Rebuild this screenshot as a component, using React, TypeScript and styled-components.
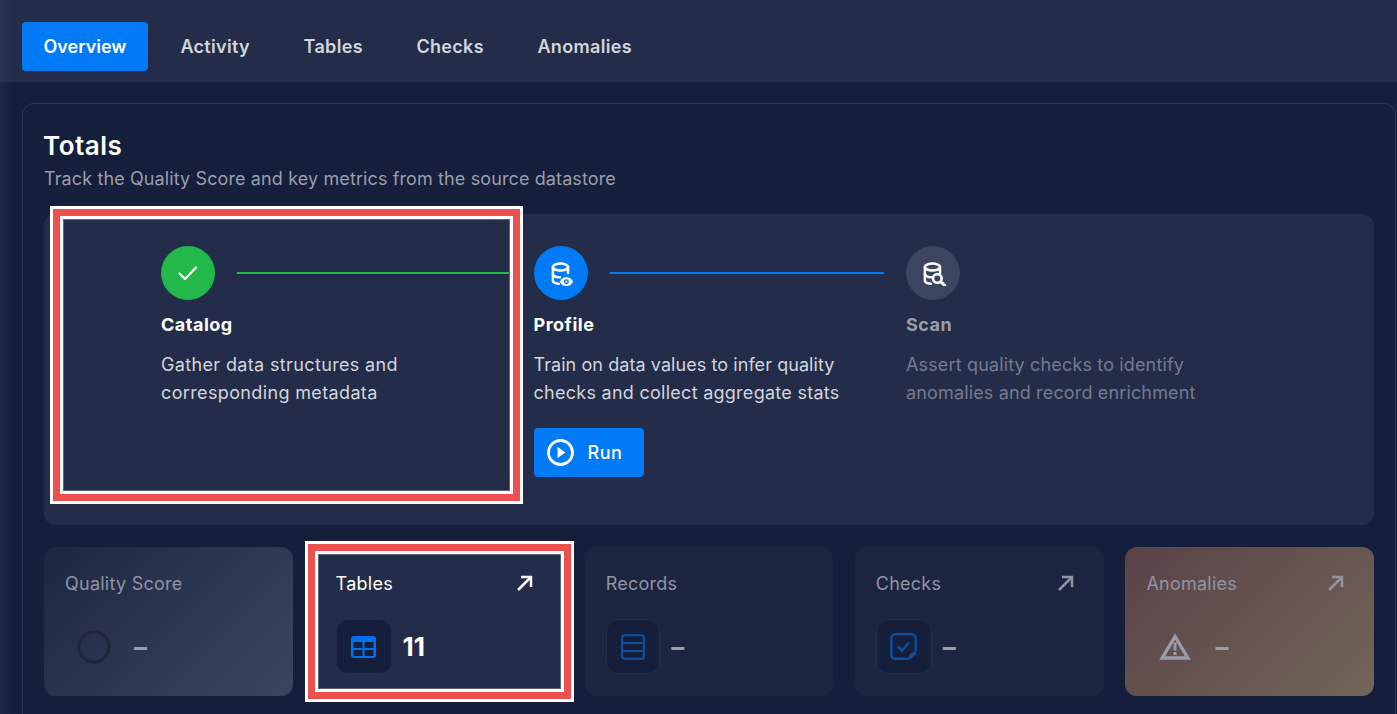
import React from "react";
import styled, { createGlobalStyle } from "styled-components";

const Global = createGlobalStyle`
  html, body { margin: 0; padding: 0; height: 714px; overflow: hidden; background: #151f3b; }
  * { box-sizing: border-box; }
  body { font-family: Inter, "Noto Sans", sans-serif; }
`;

const Page = styled.div`
  width: 1397px;
  height: 714px;
  overflow: hidden;
  display: flex;
  flex-direction: column;
  background: #151f3b;
`;
const TopBar = styled.nav`
  height: 82px;
  flex: none;
  background: linear-gradient(90deg, #2a3551 0, #232c48 12px);
  padding: 22px;
  display: flex;
  gap: 10.5px;
  align-items: flex-start;
`;
const Tab = styled.div<{ $active?: boolean }>`
  height: 49px;
  padding: 0 21.5px;
  border-radius: 4px;
  display: flex;
  align-items: center;
  font-size: 18px;
  font-weight: 600;
  letter-spacing: ${(p) => (p.$active ? "0" : "0.33px")};
  color: ${(p) => (p.$active ? "#ffffff" : "#d3d5db")};
  background: ${(p) => (p.$active ? "#007bf5" : "transparent")};
  &:nth-child(2) {
    margin-left: 0.5px;
  }
`;
const Main = styled.main`
  flex: 1;
  padding: 21px 0 0 22px;
  background: linear-gradient(90deg, #1b2845 0, #151f3b 12px);
`;
const Card = styled.section`
  width: 1374px;
  height: 700px;
  border: 1px solid #2d3753;
  border-radius: 12px;
  padding: 21px;
`;
const Title = styled.h1`
  margin: 5px 0 0 -1px;
  font-size: 26px;
  line-height: 32px;
  font-weight: 600;
  letter-spacing: 0.5px;
  color: #fff;
`;
const Subtitle = styled.p`
  margin: 4px 0 0;
  font-size: 18px;
  line-height: 26px;
  color: #9a9eab;
  letter-spacing: 0.115px;
`;
const Panel = styled.div`
  position: relative;
  margin-top: 22px;
  width: 1330px;
  height: 311px;
  border-radius: 12px;
  background: #232c48;
  padding: 32px 96px 0 117px;
  display: grid;
  grid-template-columns: repeat(3, 372.5px);
`;
const Step = styled.div``;
const StepHead = styled.div`
  display: flex;
  align-items: center;
  gap: 22px;
`;
const Circle = styled.div<{ $bg: string }>`
  width: 54px;
  height: 54px;
  flex: none;
  border-radius: 50%;
  background: ${(p) => p.$bg};
  display: flex;
  align-items: center;
  justify-content: center;
`;
const Connector = styled.div<{ $color: string }>`
  flex: 1;
  height: 2px;
  margin-right: 22px;
  background: ${(p) => p.$color};
`;
const StepTitle = styled.div<{ $muted?: boolean }>`
  margin-top: 13px;
  font-size: 18px;
  line-height: 24px;
  font-weight: 700;
  letter-spacing: 0.5px;
  color: ${(p) => (p.$muted ? "#9a9eab" : "#fff")};
`;
const StepText = styled.div<{ $muted?: boolean }>`
  margin-top: 14px;
  font-size: 18px;
  line-height: 28px;
  color: ${(p) => (p.$muted ? "#757b8c" : "#d3d5db")};
`;
const StepLine = styled.div<{ $spacing: number }>`
  letter-spacing: ${(p) => p.$spacing}px;
  white-space: nowrap;
`;
const RunButton = styled.button`
  margin-top: 21px;
  width: 110px;
  height: 49px;
  border: 0;
  border-radius: 4px;
  background: #007bf5;
  color: #fff;
  font: 500 18px Inter, "Noto Sans", sans-serif;
  letter-spacing: 0.5px;
  display: flex;
  align-items: center;
  gap: 14px;
  padding: 0 13px;
`;
const Stats = styled.div`
  margin-top: 22px;
  display: grid;
  grid-template-columns: 249px 248.5px 248.5px 249px 249px;
  gap: 21.6px;
  width: 1330px;
`;
const StatCard = styled.div<{ $bg: string }>`
  position: relative;
  height: 149px;
  border-radius: 12px;
  padding: 22px 22px 0 21px;
  background: ${(p) => p.$bg};
`;
const StatHead = styled.div`
  display: flex;
  justify-content: space-between;
  align-items: center;
  height: 28px;
`;
const StatLabel = styled.span<{ $on?: boolean }>`
  font-size: 18px;
  letter-spacing: 0.25px;
  color: ${(p) => (p.$on ? "#fff" : "#8f94a3")};
`;
const ArrowSlot = styled.span`
  display: flex;
  margin-right: 8px;
`;
const StatBody = styled.div`
  display: flex;
  align-items: center;
  gap: 11px;
  margin-top: 22px;
`;
const IconBox = styled.div<{ $plain?: boolean; $width: number }>`
  width: ${(p) => p.$width}px;
  flex: none;
  height: 55px;
  border-radius: 12px;
  display: flex;
  align-items: center;
  justify-content: center;
  background: ${(p) => (p.$plain ? "transparent" : "#151f3b")};
  border: 1px solid ${(p) => (p.$plain ? "transparent" : "#232c48")};
`;
const Value = styled.span<{ $on?: boolean }>`
  font-size: 26px;
  font-weight: 700;
  color: ${(p) => (p.$on ? "#fff" : "#9a9eab")};
`;
const Highlight = styled.div<{ $l: number; $t: number; $w: number; $h: number }>`
  position: absolute;
  left: ${(p) => p.$l}px;
  top: ${(p) => p.$t}px;
  width: ${(p) => p.$w}px;
  height: ${(p) => p.$h}px;
  border: 3px solid #fff;
  pointer-events: none;
  &::after {
    content: "";
    position: absolute;
    inset: 0;
    border: 7px solid #ee4f4f;
    box-shadow: inset 0 0 0 3px #fff, inset 0 0 0 4px #5c6379;
  }
`;

const CheckIcon = () => (
  <svg width="24" height="24" viewBox="0 0 24 24" fill="none" stroke="#fff" strokeWidth="2.2" strokeLinecap="round" strokeLinejoin="round">
    <path d="M3.5 12.5l5.5 5.5L20 6.5" />
  </svg>
);
const DbBase = () => (
  <>
    <ellipse cx="9.5" cy="5" rx="7" ry="3.2" />
    <path d="M2.5 5v12.5c0 1.5 2.5 2.700 5.500 3" />
    <path d="M16.500 5v5.500" />
    <path d="M2.500 11.500c0 1.600 2.800 2.900 6.500 3" />
  </>
);
const DbEyeIcon = () => (
  <svg width="26" height="26" viewBox="-2 -1.500 24 24" fill="none" stroke="#fff" strokeWidth="2.300" strokeLinecap="round">
    <DbBase />
    <path d="M8.500 18.500c1.800-3.400 4.300-4.500 6.500-4.500s4.700 1.100 6.500 4.500c-1.800 3.400-4.300 4.500-6.500 4.500s-4.700-1.100-6.500-4.500z" fill="#fff" stroke="#007bf5" strokeWidth="0.800" />
    <circle cx="15" cy="18.500" r="2.300" fill="#007bf5" stroke="none" />
    <circle cx="15" cy="18.500" r="1" fill="#fff" stroke="none" />
  </svg>
);
const DbScanIcon = () => (
  <svg width="26" height="26" viewBox="-2 -1.500 24 24" fill="none" stroke="#fff" strokeWidth="2.300" strokeLinecap="round">
    <DbBase />
    <circle cx="14" cy="15.500" r="4" fill="#3c4560" strokeWidth="2.400" />
    <path d="M17.200 18.700l4 3.500" strokeWidth="2.600" />
  </svg>
);
const PlayIcon = () => (
  <svg width="27" height="27" viewBox="0 0 27 27" fill="none">
    <circle cx="13.500" cy="13.500" r="12" stroke="#fff" strokeWidth="2.800" />
    <path d="M10.500 8l8 5.500-8 5.500z" fill="#fff" />
  </svg>
);
const ArrowIcon = ({ color }: { color: string }) => (
  <ArrowSlot>
    <svg width="16" height="16" viewBox="0 0 16 16" fill="none" stroke={color} strokeWidth="2.500">
      <path d="M1 15L14 2" />
      <path d="M4 2h10v10" />
    </svg>
  </ArrowSlot>
);
const TableIcon = () => (
  <svg width="25" height="22" viewBox="0 0 25 22">
    <rect width="25" height="22" rx="3" fill="#0070f0" />
    <rect x="2.500" y="6" width="9" height="6" fill="#151f3b" />
    <rect x="13.500" y="6" width="9" height="6" fill="#151f3b" />
    <rect x="2.500" y="14" width="9" height="6" fill="#151f3b" />
    <rect x="13.500" y="14" width="9" height="6" fill="#151f3b" />
  </svg>
);
const RecordsIcon = () => (
  <svg width="24" height="26" viewBox="0 0 24 26" fill="none" stroke="#0b4f9e" strokeWidth="2.200">
    <rect x="1.100" y="1.100" width="21.800" height="23.800" rx="3" />
    <path d="M1 9h22M1 17h22" />
  </svg>
);
const ChecksIcon = () => (
  <svg width="27" height="27" viewBox="0 0 27 27" fill="none">
    <path d="M18 25.700H5a3.800 3.800 0 0 1-3.700-3.700V5A3.800 3.800 0 0 1 5 1.300h17A3.800 3.800 0 0 1 25.700 5v13" stroke="#0b4f9e" strokeWidth="2.400" />
    <path d="M18 26.500c.5-4 2-7 8.500-8.500-.5 4-3.500 8-8.500 8.500z" fill="#0b4f9e" />
    <path d="M8 13.500l4 4 7-8" stroke="#0b4f9e" strokeWidth="2.600" />
  </svg>
);
const WarnIcon = () => (
  <svg width="32" height="27" viewBox="0 0 32 27" fill="none">
    <path d="M16 3.500L28.800 25H3.200z" stroke="#9a9eab" strokeWidth="3.400" strokeLinejoin="miter" />
    <path d="M16 9.500v8M16 19v3" stroke="#9a9eab" strokeWidth="3" />
  </svg>
);
const RingIcon = () => (
  <svg width="34" height="34" viewBox="0 0 34 34" fill="none">
    <circle cx="17" cy="17" r="15" stroke="#1f2639" strokeWidth="3" />
  </svg>
);

const tabs = ["Overview", "Activity", "Tables", "Checks", "Anomalies"];

export default function App() {
  return (
    <Page>
      <Global />
      <TopBar>
        {tabs.map((t, i) => (
          <Tab key={t} $active={i === 0}>{t}</Tab>
        ))}
      </TopBar>
      <Main>
        <Card>
          <Title>Totals</Title>
          <Subtitle>Track the Quality Score and key metrics from the source datastore</Subtitle>
          <Panel>
            <Step>
              <StepHead>
                <Circle $bg="#22b84a"><CheckIcon /></Circle>
                <Connector $color="#22b84a" />
              </StepHead>
              <StepTitle>Catalog</StepTitle>
              <StepText>
                <StepLine $spacing={0.36}>Gather data structures and</StepLine>
                <StepLine $spacing={0.36}>corresponding metadata</StepLine>
              </StepText>
            </Step>
            <Step>
              <StepHead>
                <Circle $bg="#007bf5"><DbEyeIcon /></Circle>
                <Connector $color="#007bf5" />
              </StepHead>
              <StepTitle>Profile</StepTitle>
              <StepText>
                <StepLine $spacing={0.07}>Train on data values to infer quality</StepLine>
                <StepLine $spacing={0.27}>checks and collect aggregate stats</StepLine>
              </StepText>
              <RunButton><PlayIcon />Run</RunButton>
            </Step>
            <Step>
              <StepHead>
                <Circle $bg="#3c4560"><DbScanIcon /></Circle>
              </StepHead>
              <StepTitle $muted>Scan</StepTitle>
              <StepText $muted>
                <StepLine $spacing={0.15}>Assert quality checks to identify</StepLine>
                <StepLine $spacing={0.15}>anomalies and record enrichment</StepLine>
              </StepText>
            </Step>
            <Highlight $l={5.5} $t={-8} $w={473} $h={298} />
          </Panel>
          <Stats>
            <StatCard $bg="linear-gradient(135deg, #1d2640 0%, #3a4660 100%)">
              <StatHead><StatLabel>Quality Score</StatLabel></StatHead>
              <StatBody>
                <IconBox $plain $width={58}><RingIcon /></IconBox>
                <Value>–</Value>
              </StatBody>
            </StatCard>
            <StatCard $bg="#232c48">
              <StatHead>
                <StatLabel $on>Tables</StatLabel>
                <ArrowIcon color="#fff" />
              </StatHead>
              <StatBody>
                <IconBox $width={56}><TableIcon /></IconBox>
                <Value $on>11</Value>
              </StatBody>
              <Highlight $l={-9.25} $t={-6} $w={268.5} $h={161} />
            </StatCard>
            <StatCard $bg="#1c2540">
              <StatHead><StatLabel>Records</StatLabel></StatHead>
              <StatBody>
                <IconBox $width={54.5}><RecordsIcon /></IconBox>
                <Value>–</Value>
              </StatBody>
            </StatCard>
            <StatCard $bg="#1c2540">
              <StatHead>
                <StatLabel>Checks</StatLabel>
                <ArrowIcon color="#8f94a3" />
              </StatHead>
              <StatBody>
                <IconBox $width={56}><ChecksIcon /></IconBox>
                <Value>–</Value>
              </StatBody>
            </StatCard>
            <StatCard $bg="linear-gradient(135deg, #5a4248 0%, #716558 100%)">
              <StatHead>
                <StatLabel>Anomalies</StatLabel>
                <ArrowIcon color="#8f94a3" />
              </StatHead>
              <StatBody>
                <IconBox $plain $width={58}><WarnIcon /></IconBox>
                <Value>–</Value>
              </StatBody>
            </StatCard>
          </Stats>
        </Card>
      </Main>
    </Page>
  );
}
